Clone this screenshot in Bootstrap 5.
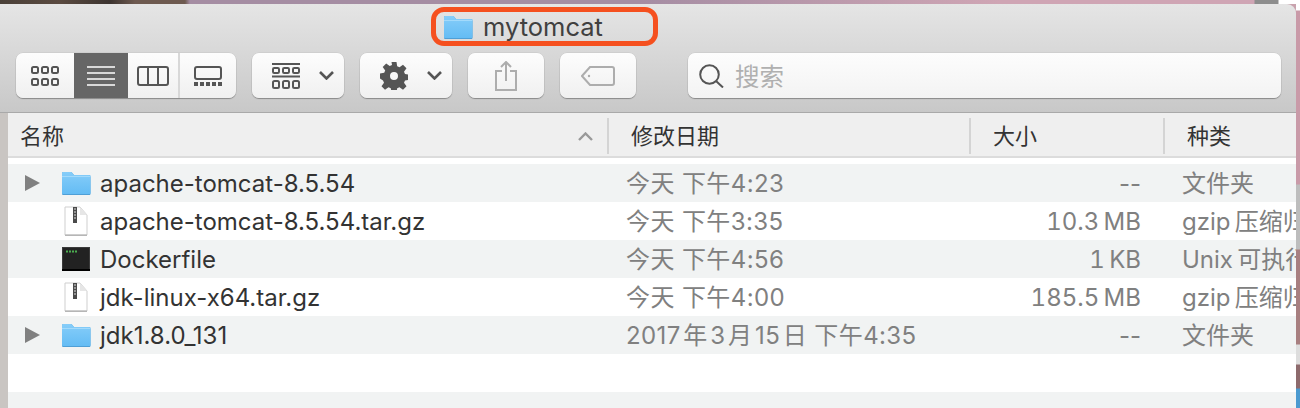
<!DOCTYPE html>
<html lang="zh">
<head>
  <meta charset="UTF-8">
  <title>mytomcat</title>
  <link href="https://cdn.jsdelivr.net/npm/bootstrap@5.3.0/dist/css/bootstrap.min.css" rel="stylesheet">
  <style>
    html, body { height: 408px; overflow: hidden; }
    body {
      background: #c9a3ae;
      font-family: "Inter", "Noto Sans CJK SC", sans-serif;
      color: #333;
    }
    .wall-top {
      height: 4px;
      background: linear-gradient(90deg, #4a4038 0, #5a4a40 60px, #3c3430 110px, #6e5a50 135px, #6e5a50 185px, #a58da3 190px, #a58da3 640px, #cfa5b4 1000px, #cfa5b4 1254px, #8d8d8d 1255px, #8d8d8d 1278px, #fff 1279px);
    }
    .win-wrap { height: 404px; }
    .win { width: 1296px; }
    .wall-side {
      width: 4px;
      background: linear-gradient(180deg, #fff 0, #fff 6px, #c99aa8 7px, #c99aa8 180px, #bdbdbd 181px, #bdbdbd 245px, #a87f80 246px, #a87f80 340px, #ddd 341px, #ddd 360px, #8d6a6c 361px, #8d6a6c 384px, #4b9ad0 385px);
    }
    .tbar {
      height: 109px;
      background: linear-gradient(180deg, #e5e5e5, #c8c8c8);
      border-top-right-radius: 9px;
      border-bottom: 1px solid #a9a9a9;
    }
    .title-row { height: 49px; padding: 3px 0 0 431px; }
    .title-box {
      width: 227px;
      height: 39px;
      border: 5px solid #f5501f;
      border-radius: 13px;
      padding-left: 7px;
      gap: 10px;
      font-size: 25.5px;
      color: #404040;
    }
    .title-text { padding-top: 2px; }
    .tools { padding: 0 15px 0 16px; gap: 16px; }
    .tool-btn, .tool-seg {
      height: 45px;
      background: linear-gradient(180deg, #fdfdfd, #f0f0f0);
      border-radius: 7px;
      box-shadow: 0 1px 1px rgba(0, 0, 0, .3), 0 0 0 .5px rgba(0, 0, 0, .08);
    }
    .tool-btn { padding: 0; border: 0; }
    .tool-w92 { width: 92px; padding-left: 20px; gap: 19px; }
    .tool-w76 { width: 76px; }
    .tool-seg { width: 220px; overflow: hidden; }
    .seg-item { height: 45px; padding: 0; border: 0; background: transparent; }
    .seg-a { width: 58px; }
    .seg-b { width: 54px; background: #666; }
    .seg-c { width: 52px; border-right: 2px solid #d8d8d8; }
    .seg-d { width: 56px; }
    .search-box {
      height: 45px;
      margin-left: 36px;
      padding-left: 11px;
      gap: 11px;
      background: linear-gradient(180deg, #fdfdfd, #f3f3f3);
      border-radius: 7px;
      box-shadow: 0 1px 1px rgba(0, 0, 0, .3), 0 0 0 .5px rgba(0, 0, 0, .08);
      font-size: 24.5px;
      color: #b0b0b0;
    }
    .search-text { padding-top: 3px; }
    .gutter { width: 8px; background: #c9c5c2; }
    .pane { background: #fff; min-width: 0; }
    .cols { display: grid; grid-template-columns: 599px 362px 194px 133px; }
    .head {
      height: 45px;
      background: #efefef;
      border-bottom: 2px solid #dcdcdc;
      margin-bottom: 6px;
      font-size: 22px;
      color: #333;
    }
    .head-cell { height: 36px; margin-top: 5px; padding-left: 22px; border-left: 2px solid #d4d4d4; }
    .head-name { padding: 0 14px 0 12px; border-left: 0; }
    .frow { height: 38px; font-size: 24px; color: #808080; white-space: nowrap; }
    .frow-alt { background: #f1f3f3; }
    .frow-name { color: #333; }
    .frow-label { padding-top: 2px; }
    .arrow-box { width: 53px; padding-left: 17px; }
    .icon-box { width: 30px; margin-right: 9px; }
    .frow-date { padding: 2px 0 0 19px; letter-spacing: .4px; }
    .frow-size { padding: 2px 22px 0 0; }
    .size-num { font-variant-numeric: tabular-nums; }
    .frow-kind { padding: 2px 0 0 19px; overflow: hidden; }
  </style>
</head>
<body>

  <svg width="0" height="0" class="d-block">
    <defs>
      <linearGradient id="folderFill" x1="0" y1="0" x2="0" y2="1">
        <stop offset="0" stop-color="#86cdf9"/>
        <stop offset="1" stop-color="#64bcf4"/>
      </linearGradient>
      <symbol id="folder" viewBox="0 0 30 24">
        <path d="M1 23V2.500C1 1.500 1.500 1 2.500 1h7c1 0 1.500.5 2 1.200L13 4h15c1 0 1.500.5 1.500 1.500V22.500c0 1-.5 1.500-1.500 1.500H2.500C1.500 24 1 23.500 1 23z" fill="#4f9fd6"/>
        <path d="M1 22V2.500C1 1.500 1.500 1 2.500 1h7c1 0 1.500.5 2 1.200L13 4h15c1 0 1.500.5 1.500 1.500V22c0 .7-.5 1-1 1H2c-.6 0-1-.3-1-1z" fill="url(#folderFill)"/>
        <path d="M1 5.500h28.500" stroke="#a3dafb" stroke-width="1"/>
      </symbol>
      <symbol id="zipdoc" viewBox="0 0 24 30">
        <path d="M1 1h15l7 8v20H1z" fill="#fff" stroke="#cfcfcf" stroke-width="1"/>
        <path d="M16 1v8h7z" fill="#e6e6e6"/>
        <path d="M1 29.200h22" stroke="#aaa" stroke-width="1.200"/>
        <rect x="9" y="1" width="4" height="16" fill="#4a4a4a"/>
        <path d="M10 3h2M10 6h2M10 9h2M10 12h2" stroke="#ddd" stroke-width="1"/>
      </symbol>
      <symbol id="disclose" viewBox="0 0 15 16">
        <path d="M0 0l15 8-15 8z" fill="#808080"/>
      </symbol>
    </defs>
  </svg>

  <div class="wall-top"></div>
  <div class="win-wrap d-flex">
    <div class="win d-flex flex-column">

      <div class="tbar flex-shrink-0">
        <div class="title-row">
          <div class="title-box d-flex align-items-center">
            <svg width="30" height="24"><use href="#folder"/></svg>
            <span class="title-text">mytomcat</span>
          </div>
        </div>
        <div class="tools d-flex">
          <div class="tool-seg d-flex">
            <button class="seg-item seg-a d-flex align-items-center justify-content-center" type="button">
              <svg width="28" height="20" viewBox="0 0 28 20" fill="none" stroke="#555" stroke-width="2">
                <rect x="1" y="1" width="6" height="6" rx="1.500"/><rect x="11" y="1" width="6" height="6" rx="1.500"/><rect x="21" y="1" width="6" height="6" rx="1.500"/>
                <rect x="1" y="13" width="6" height="6" rx="1.500"/><rect x="11" y="13" width="6" height="6" rx="1.500"/><rect x="21" y="13" width="6" height="6" rx="1.500"/>
              </svg>
            </button>
            <button class="seg-item seg-b d-flex align-items-center justify-content-center" type="button">
              <svg width="28" height="20" viewBox="0 0 28 20" stroke="#fff" stroke-width="1.600"><path d="M0 1h28M0 7h28M0 13h28M0 19h28"/></svg>
            </button>
            <button class="seg-item seg-c d-flex align-items-center justify-content-center" type="button">
              <svg width="32" height="20" viewBox="0 0 32 20" fill="none" stroke="#555" stroke-width="2"><rect x="1" y="1" width="30" height="18" rx="2"/><path d="M11 1v18M21 1v18"/></svg>
            </button>
            <button class="seg-item seg-d d-flex align-items-center justify-content-center" type="button">
              <svg width="28" height="20" viewBox="0 0 28 20" fill="none" stroke="#555" stroke-width="2">
                <rect x="1" y="1" width="26" height="12" rx="2"/>
                <path d="M0 18h4M6 18h4M12 18h4M18 18h4M24 18h4" stroke-width="4"/>
              </svg>
            </button>
          </div>

          <button class="tool-btn tool-w92 d-flex align-items-center" type="button">
            <svg width="28" height="26" viewBox="0 0 28 26" fill="none" stroke="#555">
              <path d="M0 1h28M0 13.500h28" stroke-width="1.800"/>
              <g stroke-width="2"><rect x="1" y="5" width="6" height="5" rx="1.200"/><rect x="11" y="5" width="6" height="5" rx="1.200"/><rect x="21" y="5" width="6" height="5" rx="1.200"/>
              <rect x="1" y="18" width="6" height="7" rx="1.500"/><rect x="11" y="18" width="6" height="7" rx="1.500"/><rect x="21" y="18" width="6" height="7" rx="1.500"/></g>
            </svg>
            <svg width="15" height="9" viewBox="0 0 15 9" fill="none" stroke="#555" stroke-width="2.600"><path d="M1 1l6.500 6.500L14 1"/></svg>
          </button>

          <button class="tool-btn tool-w92 d-flex align-items-center" type="button">
            <svg width="28" height="28" viewBox="0 0 28 28">
              <path fill="#555" fill-rule="evenodd" d="M11.500 0h5l.7 4.200 2.300 1 3.500-2.500 3.500 3.500-2.500 3.500 1 2.300 4.200.7v5l-4.200.7-1 2.300 2.500 3.500-3.500 3.500-3.500-2.500-2.300 1-.7 4.200h-5l-.7-4.200-2.300-1-3.500 2.500-3.500-3.500 2.500-3.500-1-2.300L0 16.500v-5l4.200-.7 1-2.300-2.500-3.500 3.500-3.500 3.500 2.500 2.300-1zM14 10a4 4 0 1 0 0 8 4 4 0 0 0 0-8z"/>
            </svg>
            <svg width="15" height="9" viewBox="0 0 15 9" fill="none" stroke="#555" stroke-width="2.600"><path d="M1 1l6.500 6.500L14 1"/></svg>
          </button>

          <button class="tool-btn tool-w76 d-flex align-items-center justify-content-center" type="button">
            <svg width="22" height="30" viewBox="0 0 22 30" fill="none" stroke="#adadad" stroke-width="2">
              <path d="M7 10H1v19h20V10h-6"/><path d="M11 20V1M6 6l5-5 5 5"/>
            </svg>
          </button>

          <button class="tool-btn tool-w76 d-flex align-items-center justify-content-center" type="button">
            <svg width="34" height="20" viewBox="0 0 34 20" fill="none" stroke="#adadad" stroke-width="2">
              <path d="M9 1h22c1.500 0 2 .5 2 2v14c0 1.500-.5 2-2 2H9L1 10z"/><circle cx="8" cy="10" r="1.200" fill="#adadad" stroke="none"/>
            </svg>
          </button>

          <div class="search-box flex-grow-1 d-flex align-items-center">
            <svg width="25" height="24" viewBox="0 0 25 24" fill="none" stroke="#555" stroke-width="2"><circle cx="10.500" cy="10.500" r="9.300"/><path d="M17 17l7 6.500"/></svg>
            <span class="search-text">搜索</span>
          </div>
        </div>
      </div>

      <div class="d-flex flex-grow-1 overflow-hidden">
        <div class="gutter"></div>
        <div class="pane flex-grow-1">
          <div class="head cols">
            <div class="head-cell head-name d-flex align-items-center justify-content-between">
              <span>名称</span>
              <svg width="15" height="9" viewBox="0 0 15 9" fill="none" stroke="#999" stroke-width="2.400"><path d="M1 8l6.500-6.500L14 8"/></svg>
            </div>
            <div class="head-cell d-flex align-items-center">修改日期</div>
            <div class="head-cell d-flex align-items-center">大小</div>
            <div class="head-cell d-flex align-items-center">种类</div>
          </div>

          <div class="frow frow-alt cols align-items-center">
            <div class="frow-name d-flex align-items-center">
              <div class="arrow-box d-flex"><svg width="15" height="16"><use href="#disclose"/></svg></div>
              <div class="icon-box d-flex justify-content-center"><svg width="30" height="24"><use href="#folder"/></svg></div>
              <span class="frow-label">apache-tomcat-8.5.54</span>
            </div>
            <div class="frow-date">今天 下午4:23</div>
            <div class="frow-size text-end">--</div>
            <div class="frow-kind">文件夹</div>
          </div>

          <div class="frow cols align-items-center">
            <div class="frow-name d-flex align-items-center">
              <div class="arrow-box"></div>
              <div class="icon-box d-flex justify-content-center"><svg width="24" height="30"><use href="#zipdoc"/></svg></div>
              <span class="frow-label">apache-tomcat-8.5.54.tar.gz</span>
            </div>
            <div class="frow-date">今天 下午3:35</div>
            <div class="frow-size size-num text-end">10.3&thinsp;MB</div>
            <div class="frow-kind">gzip&thinsp;压缩归档</div>
          </div>

          <div class="frow frow-alt cols align-items-center">
            <div class="frow-name d-flex align-items-center">
              <div class="arrow-box"></div>
              <div class="icon-box d-flex justify-content-center">
                <svg width="28" height="24" viewBox="0 0 28 24">
                  <rect x=".5" y=".5" width="27" height="23" fill="#222" stroke="#3a3a3a"/>
                  <rect x="0" y="22" width="28" height="2" fill="#000"/>
                  <path d="M4 4.500h2M7 4.500h2M10 4.500h2M13 4.500h2" stroke="#4caf50" stroke-width="2"/>
                </svg>
              </div>
              <span class="frow-label">Dockerfile</span>
            </div>
            <div class="frow-date">今天 下午4:56</div>
            <div class="frow-size size-num text-end">1&thinsp;KB</div>
            <div class="frow-kind">Unix&thinsp;可执行文件</div>
          </div>

          <div class="frow cols align-items-center">
            <div class="frow-name d-flex align-items-center">
              <div class="arrow-box"></div>
              <div class="icon-box d-flex justify-content-center"><svg width="24" height="30"><use href="#zipdoc"/></svg></div>
              <span class="frow-label">jdk-linux-x64.tar.gz</span>
            </div>
            <div class="frow-date">今天 下午4:00</div>
            <div class="frow-size size-num text-end">185.5&thinsp;MB</div>
            <div class="frow-kind">gzip&thinsp;压缩归档</div>
          </div>

          <div class="frow frow-alt cols align-items-center">
            <div class="frow-name d-flex align-items-center">
              <div class="arrow-box d-flex"><svg width="15" height="16"><use href="#disclose"/></svg></div>
              <div class="icon-box d-flex justify-content-center"><svg width="30" height="24"><use href="#folder"/></svg></div>
              <span class="frow-label">jdk1.8.0_131</span>
            </div>
            <div class="frow-date">2017&#8202;年&#8202;3&#8202;月&#8202;15&#8202;日 下午4:35</div>
            <div class="frow-size text-end">--</div>
            <div class="frow-kind">文件夹</div>
          </div>

          <div class="frow"></div>
          <div class="frow frow-alt"></div>
        </div>
      </div>
    </div>
    <div class="wall-side"></div>
  </div>

  <script src="https://cdn.jsdelivr.net/npm/bootstrap@5.3.0/dist/js/bootstrap.bundle.min.js"></script>
</body>
</html>
